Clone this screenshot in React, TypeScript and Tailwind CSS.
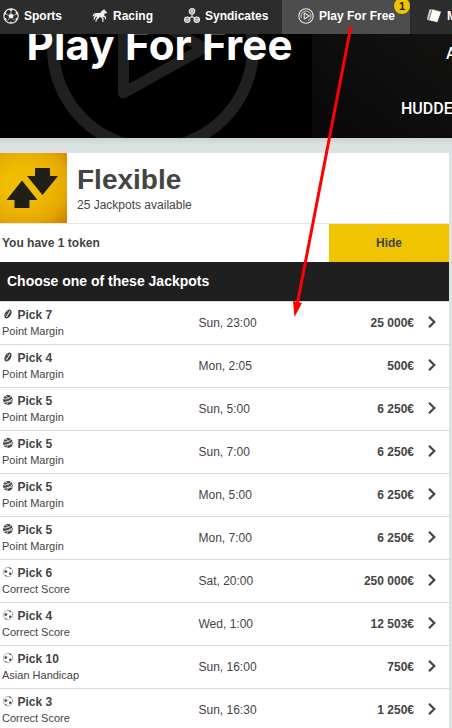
import { ReactNode } from "react";

type Sport = "rugby" | "basketball" | "football";

type Jackpot = {
  sport: Sport;
  name: string;
  market: string;
  time: string;
  prize: string;
};

const jackpots: Jackpot[] = [
  { sport: "rugby", name: "Pick 7", market: "Point Margin", time: "Sun, 23:00", prize: "25 000€" },
  { sport: "rugby", name: "Pick 4", market: "Point Margin", time: "Mon, 2:05", prize: "500€" },
  { sport: "basketball", name: "Pick 5", market: "Point Margin", time: "Sun, 5:00", prize: "6 250€" },
  { sport: "basketball", name: "Pick 5", market: "Point Margin", time: "Sun, 7:00", prize: "6 250€" },
  { sport: "basketball", name: "Pick 5", market: "Point Margin", time: "Mon, 5:00", prize: "6 250€" },
  { sport: "basketball", name: "Pick 5", market: "Point Margin", time: "Mon, 7:00", prize: "6 250€" },
  { sport: "football", name: "Pick 6", market: "Correct Score", time: "Sat, 20:00", prize: "250 000€" },
  { sport: "football", name: "Pick 4", market: "Correct Score", time: "Wed, 1:00", prize: "12 503€" },
  { sport: "football", name: "Pick 10", market: "Asian Handicap", time: "Sun, 16:00", prize: "750€" },
  { sport: "football", name: "Pick 3", market: "Correct Score", time: "Sun, 16:30", prize: "1 250€" },
];

function FootballNavIcon() {
  return (
    <svg viewBox="0 0 16 16" className="size-4 shrink-0">
      <circle cx="8" cy="8" r="7.2" fill="none" stroke="#f2f2f2" strokeWidth="1.1" />
      <path
        d="M8 5.200l2.700 2-1 3.100H6.300l-1-3.100zM5.200 1.600L8 3.100l2.800-1.500L8 .8zM1 7.600l2-1.500.4-3.200L1.700 5zM15 7.600l-2-1.500-.4-3.200L14.300 5zM3.200 12.900l.3-2.500-2.100-.9.6 2zM12.800 12.900l-.3-2.500 2.100-.9-.6 2zM6 14.800l2-1.200 2 1.200z"
        fill="#f2f2f2"
      />
      <path
        d="M8 5.200V3.100M5.300 7.200L3 6.100M10.700 7.200L13 6.100M6.300 10.300l-1.600 2M9.700 10.300l1.600 2"
        stroke="#d5d5d5"
        strokeWidth=".8"
      />
    </svg>
  );
}

function HorseIcon() {
  return (
    <svg viewBox="0 0 16 16" className="size-4 shrink-0">
      <path
        d="M12.300 1.200l.6 1 2.300 2.500-.9.9-1.700-.4-.4 2.400 1.900 1.300-.2 2.500-.9-.1-.1-1.700-2.300-.7-1.700.2-1.300-.2-1 1.500-1.500 1.200-.8 2.100-1-.2.7-2.700 1-1.500-.3-.9-1.400 1.200-.7 1.900-1.100.2.5-2.600 1-1.500C2 6.900 1.600 8 .7 8.700.4 7 1.700 5.100 3.600 5.200c1.600-.5 3.400.2 4.800-.4C9.300 3.400 10.500 2 12.300 1.200z"
        fill="#f0f0f0"
      />
      <path d="M8.500 8.300l2.600 2.500-.4 3" fill="none" stroke="#f0f0f0" strokeWidth="1.200" />
    </svg>
  );
}

function SyndicatesIcon() {
  return (
    <svg viewBox="0 0 16 16" className="size-4 shrink-0" fill="none" stroke="#e6e6e6">
      <path d="M8 5.500v4M8 8.500l-3 2M8 8.500l3 2" strokeWidth="1.100" />
      <g fill="#8a8a8a">
        <circle cx="8" cy="3.300" r="2.700" strokeWidth="1.200" />
        <circle cx="3.200" cy="11.800" r="2.700" strokeWidth="1.200" />
        <circle cx="12.800" cy="11.800" r="2.700" strokeWidth="1.200" />
      </g>
      <path
        d="M6.800 2.300L8 4l1.200-1.700M1.600 11.200l1.600 1.400 1.600-1.400M11.200 11.200l1.600 1.400 1.600-1.400"
        strokeWidth="1.100"
      />
    </svg>
  );
}

function PlayIcon() {
  return (
    <svg viewBox="0 0 16 16" className="size-4 shrink-0" fill="none" stroke="#e8e8e8">
      <circle cx="8" cy="8" r="7.200" strokeWidth="1.100" />
      <path d="M3.500 10.200A5 5 0 1 1 10 12.600" strokeWidth=".8" />
      <path d="M6.200 5.100v5.800L11.300 8z" strokeWidth="1.100" strokeLinejoin="round" />
    </svg>
  );
}

function CardsIcon() {
  return (
    <svg viewBox="0 0 16 16" className="size-4 shrink-0">
      <path d="M3.400 1.400L8 1 4 13 .8 11.600z" fill="#cfcfcf" />
      <path d="M6.200 1l9.200 2.600-3.900 11L2.700 12.400z" fill="#fff" stroke="#2c2c2c" strokeWidth=".6" />
    </svg>
  );
}

function SportIcon({ sport }: { sport: Sport }) {
  if (sport === "rugby") {
    return (
      <svg viewBox="0 0 12 12" className="-mt-px size-3 shrink-0">
        <g transform="rotate(30 6 6)">
          <ellipse cx="6" cy="6" rx="3" ry="5" fill="#444" />
          <path d="M6.200 2.600v6.800" stroke="#fff" strokeWidth=".9" />
          <path d="M3.200 4.200h2M3.200 7.800h2" stroke="#aaa" strokeWidth=".6" />
        </g>
      </svg>
    );
  }
  if (sport === "basketball") {
    return (
      <svg viewBox="0 0 12 12" className="-mt-px size-3 shrink-0">
        <circle cx="6" cy="6" r="5" fill="#444" />
        <path
          d="M.8 4.600C4 5.600 7 4.600 9.600 1.800M1.400 8.400C5 8.200 8.600 6.800 11 4.200M4.600 11c.2-2.400 2.800-4.200 6.400-4M2.800 1.600c1.600.4 3.200 1.600 3.600 3.200"
          fill="none"
          stroke="#fff"
          strokeWidth=".9"
        />
      </svg>
    );
  }
  return (
    <svg viewBox="0 0 12 12" className="-mt-px size-3 shrink-0">
      <circle cx="6" cy="6" r="4.700" fill="#fff" stroke="#9a9a9a" strokeWidth=".7" />
      <path
        d="M2.600 4.600l2-.4.8 1.500L4 7.100l-1.600-.8zM7.200 6.800l1.600-.4.9 1.400-1.200 1.300-1.500-.7zM6.600 1.300l2.400.7.3 1.200-1.600-.4zM2.600 9l1.600.2.8 1.500-1.400-.5zM10.200 4.400l.6 1.400-.5.6z"
        fill="#444"
      />
    </svg>
  );
}

function NavItem({
  icon,
  label,
  className,
}: {
  icon: ReactNode;
  label: string;
  className: string;
}) {
  return (
    <div className={`flex h-full shrink-0 items-center whitespace-nowrap ${className}`}>
      {icon}
      <span className="ml-[5px]">{label}</span>
    </div>
  );
}

function JackpotRow({ jackpot }: { jackpot: Jackpot }) {
  return (
    <div className="flex h-[43px] items-center border-t border-[#d9d9d9]">
      <div className="w-[198.500px] pl-0.5">
        <div className="flex h-[17px] items-center text-[12px] font-bold">
          <SportIcon sport={jackpot.sport} />
          <span className="ml-[3.500px]">{jackpot.name}</span>
        </div>
        <div className="h-[17px] text-[11px] leading-[17px]">{jackpot.market}</div>
      </div>
      <div className="flex-1 text-[12px]">{jackpot.time}</div>
      <div className="text-[12px] font-bold">{jackpot.prize}</div>
      <svg viewBox="0 0 8 12" className="mt-[-2px] mr-[13px] ml-[14px] h-3 w-2 shrink-0">
        <path d="M1 .8L6.300 6 1 11.200" fill="none" stroke="#444" strokeWidth="2.200" />
      </svg>
    </div>
  );
}

export default function App() {
  return (
    <div className="relative h-[728px] w-[452px] overflow-hidden bg-[#dde2e2] font-['Liberation_Sans',Arial,sans-serif] text-[#444]">
      {/* Navigation */}
      <nav className="flex h-[34px] bg-[#2c2c2c] pb-[3px] text-[12px] font-bold text-white">
        <NavItem className="w-[92px] pl-[3px]" icon={<FootballNavIcon />} label="Sports" />
        <NavItem className="w-[91px]" icon={<HorseIcon />} label="Racing" />
        <NavItem className="w-[99px] pl-px" icon={<SyndicatesIcon />} label="Syndicates" />
        <div className="relative h-[34px] w-32 shrink-0 bg-[#4d4d4d] pb-[3px]">
          <NavItem className="pl-4" icon={<PlayIcon />} label="Play For Free" />
          <span className="absolute -top-[2px] right-0 flex size-4 items-center justify-center rounded-full bg-[#f0c400] text-[11px] leading-none font-bold text-[#222]">
            1
          </span>
        </div>
        <NavItem className="pl-4" icon={<CardsIcon />} label="More" />
      </nav>

      {/* Banner */}
      <div className="relative flex h-[104px] overflow-hidden bg-black text-white">
        <svg viewBox="0 34 312 104" className="absolute top-0 left-0 h-[104px] w-[312px]">
          <g fill="none" stroke="#202020">
            <circle cx="153" cy="48" r="100" strokeWidth="12" />
            <path d="M123.500 3v90L204 48z" strokeWidth="11" strokeLinejoin="round" />
          </g>
        </svg>
        <div className="relative -mt-[10px] w-[312px] shrink-0 pl-[26.500px] font-['Inter',sans-serif] text-[42px] leading-[42px] font-bold tracking-[0.2px] whitespace-nowrap">
          Play For Free
        </div>
        <div className="flex-1 overflow-hidden bg-linear-to-tr from-[#080808] to-[#131312] font-['Roboto',sans-serif] text-[16px] leading-5 font-medium whitespace-nowrap">
          <div className="pt-[10px] pl-[134px]">ARSENAL</div>
          <div className="pt-[35px] pl-[89px]">HUDDERSFIELD</div>
        </div>
      </div>
      <div className="h-[15px] bg-linear-to-b from-[#cdd2d1] to-[#dde2e2] to-50%" />

      {/* Jackpot card */}
      <div className="w-[449px] bg-white">
        <div className="flex h-[71px] border-b border-[#e6e6e6]">
          <div className="h-[70px] w-[67px] bg-radial-[at_35%_45%] from-[#f0bd00] from-30% via-[#e5a800] via-70% to-[#cc7c00]">
            <svg viewBox="0 0 67 70" className="h-[70px] w-[67px]">
              <path
                d="M35 15h15v8h8L42.500 42 27 23h8zM22 27.500L37.500 47H29.500v8H14.500v-8H6.500z"
                fill="#201f19"
              />
            </svg>
          </div>
          <div className="pt-[11px] pl-[10px]">
            <h1 className="text-[28px] leading-[32px] font-bold">Flexible</h1>
            <p className="text-[12px] leading-[18px]">25 Jackpots available</p>
          </div>
        </div>
        <div className="flex h-[38px] items-center text-[12px] font-bold">
          <div className="flex-1 pl-0.5">You have 1 token</div>
          <button className="h-[38px] w-[120px] bg-[#f0c400]">Hide</button>
        </div>
        <div className="h-[39px] bg-[#1f1f1f] pl-[7px] text-[14px] leading-[39px] font-bold text-white">
          Choose one of these Jackpots
        </div>
        {jackpots.map((jackpot, index) => (
          <JackpotRow key={index} jackpot={jackpot} />
        ))}
      </div>

      {/* Arrow from the nav tab to the list */}
      <svg
        viewBox="0 0 452 728"
        className="pointer-events-none absolute top-0 left-0 h-[728px] w-[452px]"
      >
        <path d="M351 26L297.500 303" stroke="#f00" strokeWidth="3" />
        <path d="M293 301l9 2-7.500 14z" fill="#f00" />
      </svg>
    </div>
  );
}
